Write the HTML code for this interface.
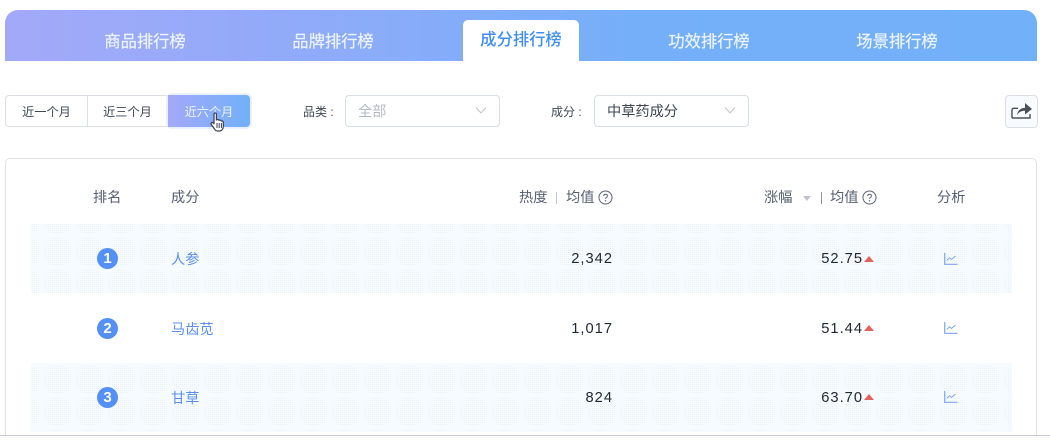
<!DOCTYPE html>
<html lang="zh">
<head>
<meta charset="utf-8">
<style>
html,body{margin:0;padding:0;background:#fff;width:1050px;height:442px;overflow:hidden}
#w{position:absolute;left:0;top:0;width:1050px;height:442px;overflow:hidden;background:#fff;filter:blur(.3px);font-family:"Liberation Sans","Noto Sans CJK SC",sans-serif;color:#4a5568}
.a{position:absolute;white-space:nowrap}
.tabs{left:5px;top:10px;width:1032px;height:51px;border-radius:13px 13px 0 0;background:linear-gradient(90deg,#a3a9f9 0%,#8fabf9 30%,#75aff9 62%,#72b0f9 100%)}
.tab{top:31px;height:22px;line-height:22px;font-size:16.3px;color:#eef4ff;width:116px;text-align:center;-webkit-text-stroke:.2px #eef4ff}
.act{left:463px;top:20px;width:116px;height:41px;background:#fff;border-radius:5px 5px 0 0;color:#3f8ef5;font-size:16.3px;font-weight:500;line-height:41px;text-align:center}
.seg{top:95px;height:30px;border:1px solid #dcdfe6;background:#fff;font-size:12.200px;line-height:32px;text-align:center;color:#3f4754}
.sel{top:95px;height:30px;border:1px solid #d9dde4;border-radius:4px;background:#fff;font-size:14.200px;line-height:32px}
.lab{top:104px;font-size:12px;line-height:16px;color:#3f4754}
.th{top:188px;font-size:14.200px;line-height:20px;color:#566072}
.num{font-size:14.700px;line-height:20px;color:#222935;letter-spacing:1px;text-align:right}
.name{font-size:14.200px;line-height:20px;color:#5d90ee}
.rank{left:97px;width:21px;height:21px;border-radius:50%;background:#5590f6;color:#fff;font-size:15px;font-weight:bold;line-height:21px;text-align:center}
.tri{width:0;height:0;border-left:5.500px solid transparent;border-right:5.500px solid transparent;border-bottom:6px solid #e0635f}
</style>
</head>
<body>
<div id="w">
<div class="a tabs"></div>
<div class="a tab" style="left:87px">商品排行榜</div>
<div class="a tab" style="left:275px">品牌排行榜</div>
<div class="a act">成分排行榜</div>
<div class="a tab" style="left:651px">功效排行榜</div>
<div class="a tab" style="left:839px">场景排行榜</div>

<div class="a seg" style="left:5px;width:81px;border-radius:4px 0 0 4px">近一个月</div>
<div class="a seg" style="left:88px;width:79px;border-left:0">近三个月</div>
<div class="a" style="left:166px;top:93px;width:86px;height:36px;border-radius:6px;background:#e8f1fd"></div>
<div class="a" style="left:168px;top:95px;width:82px;height:32px;border-radius:0 4px 4px 0;background:linear-gradient(90deg,#a3a9f9,#72b0f9);color:#eef4ff;font-size:12.200px;line-height:34px;text-align:center">近六个月</div>
<svg class="a" style="left:208px;top:112px" width="20" height="22" viewBox="0 0 20 22">
<path d="M6 2.200c0-1.600 2.400-1.600 2.400 0V8l.6-.3c1-.4 1.800 0 2 .6 1-.5 2-.1 2.200.7 1-.4 2.100.1 2.100 1.200v4.300c0 2.400-1.500 4.500-3.700 4.500H9.500c-1.500 0-2.300-.8-3-2L3.300 12.500c-.9-1.300.8-2.700 2-1.500L6 11.800z" fill="#fff" stroke="#3a4250" stroke-width="1.200" stroke-linejoin="round"/>
<path d="M9 11v5M11.200 11v5M13.400 11v5" stroke="#3a4250" stroke-width="1"/>
</svg>

<div class="a lab" style="left:303px">品类&nbsp;:</div>
<div class="a sel" style="left:345px;width:153px;color:#b4b9c2"><span style="margin-left:12px">全部</span></div>
<svg class="a" style="left:475px;top:106px" width="12" height="9" viewBox="0 0 12 9"><path d="M1 1.500l5 5.500 5-5.500" fill="none" stroke="#c0c4cc" stroke-width="1"/></svg>
<div class="a lab" style="left:551px">成分&nbsp;:</div>
<div class="a sel" style="left:594px;width:153px;color:#3d4653"><span style="margin-left:12px">中草药成分</span></div>
<svg class="a" style="left:724px;top:106px" width="12" height="9" viewBox="0 0 12 9"><path d="M1 1.500l5 5.500 5-5.500" fill="none" stroke="#c0c4cc" stroke-width="1"/></svg>

<div class="a" style="left:1005px;top:95px;width:31px;height:31px;border:1px solid #dcdfe6;border-radius:4px;background:#f8fbff"></div>
<svg class="a" style="left:1010px;top:100px" width="24" height="20" viewBox="0 0 24 20">
<path d="M2 18V10c0-1 .8-1.700 1.700-1.700H8M2 18H20V14" fill="none" stroke="#4a505a" stroke-width="1.400"/>
<path d="M7 15c.5-4 3.500-7 8-7.200V3l7 6-7 5.500v-3.700c-3.500 0-6 1.200-8 4.200z" fill="#4a505a"/>
</svg>

<div class="a" style="left:5px;top:158px;width:1030px;height:285px;border:1px solid #dfe3e9;border-radius:5px;background:#fff;box-sizing:content-box"></div>

<div class="a th" style="left:93px">排名</div>
<div class="a th" style="left:171px">成分</div>
<div class="a th" style="left:519px">热度</div>
<div class="a" style="left:556px;top:192px;width:1px;height:12px;background:#c4c9d1"></div>
<div class="a th" style="left:566px">均值</div>
<svg class="a" style="left:598px;top:190px" width="15" height="15" viewBox="0 0 15 15"><circle cx="7.500" cy="7.500" r="6.500" fill="none" stroke="#5a6474" stroke-width="1"/><path d="M5.700 6c0-2.300 3.700-2.300 3.700 0 0 1.400-1.900 1.400-1.900 2.900" fill="none" stroke="#5a6474" stroke-width="1"/><circle cx="7.500" cy="10.800" r=".7" fill="#5a6474"/></svg>
<div class="a th" style="left:764px">涨幅</div>
<div class="a" style="left:803px;top:196px;width:0;height:0;border-left:4.500px solid transparent;border-right:4.500px solid transparent;border-top:5px solid #c0c4cc"></div>
<div class="a" style="left:821px;top:192px;width:1px;height:12px;background:#8d95a2"></div>
<div class="a th" style="left:830px">均值</div>
<svg class="a" style="left:862px;top:190px" width="15" height="15" viewBox="0 0 15 15"><circle cx="7.500" cy="7.500" r="6.500" fill="none" stroke="#5a6474" stroke-width="1"/><path d="M5.700 6c0-2.300 3.700-2.300 3.700 0 0 1.400-1.900 1.400-1.900 2.900" fill="none" stroke="#5a6474" stroke-width="1"/><circle cx="7.500" cy="10.800" r=".7" fill="#5a6474"/></svg>
<div class="a th" style="left:937px">分析</div>

<svg class="a" style="left:31px;top:224px" width="981" height="208" viewBox="0 0 981 208">
<defs>
<pattern id="d" width="2" height="2" patternUnits="userSpaceOnUse"><rect width="1" height="1" fill="#ebf2f7"/></pattern>
<pattern id="b" x="11" y="12" width="32" height="32" patternUnits="userSpaceOnUse"><circle cx="16" cy="16" r="14.500" fill="url(#d)"/></pattern>
</defs>
<rect width="981" height="69" fill="#f6fbff"/>
<rect width="981" height="69" fill="url(#b)"/>
<rect y="139" width="981" height="69" fill="#f6fbff"/>
<rect y="139" width="981" height="69" fill="url(#b)"/>
</svg>

<div class="a rank" style="top:248px">1</div>
<div class="a name" style="left:171px;top:250px">人参</div>
<div class="a num" style="left:520px;width:93px;top:249px">2,342</div>
<div class="a num" style="left:770px;width:93px;top:249px">52.75</div>
<div class="a tri" style="left:864px;top:256px"></div>
<svg class="a" style="left:944px;top:253px" width="14" height="12" viewBox="0 0 14 12"><path d="M.7 0v11.300H13.500" fill="none" stroke="#7da6ee" stroke-width="1.200"/><path d="M2.800 7.500l2.700-2.700 2 1.700 4-3.500" fill="none" stroke="#7da6ee" stroke-width="1"/></svg>

<div class="a rank" style="top:318px">2</div>
<div class="a name" style="left:171px;top:320px">马齿苋</div>
<div class="a num" style="left:520px;width:93px;top:319px">1,017</div>
<div class="a num" style="left:770px;width:93px;top:319px">51.44</div>
<div class="a tri" style="left:864px;top:325px"></div>
<svg class="a" style="left:944px;top:322px" width="14" height="12" viewBox="0 0 14 12"><path d="M.7 0v11.300H13.500" fill="none" stroke="#7da6ee" stroke-width="1.200"/><path d="M2.800 7.500l2.700-2.700 2 1.700 4-3.500" fill="none" stroke="#7da6ee" stroke-width="1"/></svg>

<div class="a rank" style="top:387px">3</div>
<div class="a name" style="left:171px;top:389px">甘草</div>
<div class="a num" style="left:520px;width:93px;top:388px">824</div>
<div class="a num" style="left:770px;width:93px;top:388px">63.70</div>
<div class="a tri" style="left:864px;top:394px"></div>
<svg class="a" style="left:944px;top:391px" width="14" height="12" viewBox="0 0 14 12"><path d="M.7 0v11.300H13.500" fill="none" stroke="#7da6ee" stroke-width="1.200"/><path d="M2.800 7.500l2.700-2.700 2 1.700 4-3.500" fill="none" stroke="#7da6ee" stroke-width="1"/></svg>

<div class="a" style="left:0;top:435px;width:1050px;height:7px;background:#fff;border-top:1px solid #c8ccd2;box-sizing:border-box"></div>
</div>
</body>
</html>
